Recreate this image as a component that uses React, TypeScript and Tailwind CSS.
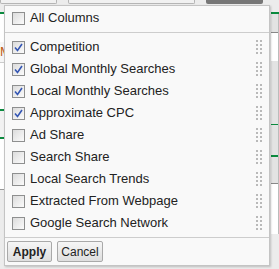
import React, { useState } from "react";

const columns = [
  { name: "Competition", on: true },
  { name: "Global Monthly Searches", on: true },
  { name: "Local Monthly Searches", on: true },
  { name: "Approximate CPC", on: true },
  { name: "Ad Share", on: false },
  { name: "Search Share", on: false },
  { name: "Local Search Trends", on: false },
  { name: "Extracted From Webpage", on: false },
  { name: "Google Search Network", on: false },
];

const Check = ({ on }: { on: boolean }) => (
  <span className="flex h-[13px] w-[13px] shrink-0 items-center justify-center border border-[#8e8f8f] bg-gradient-to-br from-[#dcdcdc] to-[#fbfbfb]">
    {on && (
      <svg width="9" height="9" viewBox="0 0 9 9">
        <path d="M1 4.5 L3.5 7.5 L8 1" fill="none" stroke="#3456b3" strokeWidth="1.6" />
      </svg>
    )}
  </span>
);

const Grip = () => (
  <div className="grid grid-cols-2 gap-x-[2px] gap-y-[2px]">
    {Array.from({ length: 8 }).map((_, i) => (
      <span key={i} className="h-[2px] w-[2px] bg-[#b9b9b9]" />
    ))}
  </div>
);

const App = () => {
  const [cols, setCols] = useState(columns);
  const allOn = cols.every((c) => c.on);

  const toggle = (i: number) =>
    setCols(cols.map((c, j) => (j === i ? { ...c, on: !c.on } : c)));

  return (
    <div className="relative h-[269px] w-[279px] overflow-hidden bg-[#ececec] font-['Liberation_Sans',Arial,sans-serif]">
      {/* page behind the popup */}
      <div className="flex h-[4px] gap-[11px]">
        <div className="w-[57px] rounded-b-[2px] border border-t-0 border-[#b5b5b5] bg-[#f1f1f1]" />
        <div className="w-[127px] rounded-b-[2px] border border-t-0 border-[#b5b5b5] bg-[#f1f1f1]" />
        <div className="w-[57px] rounded-b-[2px] bg-[#777]" />
      </div>
      <div className="mt-[8px] flex justify-between">
        <div className="h-[2px] w-[4px] bg-[#0b8a3e]" />
        <div className="h-[2px] w-[8px] bg-[#0b8a3e]" />
      </div>
      <div className="flex justify-between">
        <div className="flex w-[4px] flex-col">
          <div className="h-[28px] bg-white" />
          <div className="h-[20px] bg-[#f6f6f6] text-[13px] leading-[20px] text-[#c05a12]">M</div>
          <div className="h-[47px] border-t border-[#ccc] bg-white" />
          <div className="h-[2px] bg-[#0b8a3e]" />
          <div className="h-[26px] bg-[#f2f2f2]" />
          <div className="h-[2px] bg-[#0b8a3e]" />
          <div className="h-[50px] bg-white" />
          <div className="h-[1px] bg-[#999]" />
        </div>
        <div className="flex w-[8px] flex-col border-r border-[#bbb]">
          <div className="h-[18px] bg-[#e3e3e3]" />
          <div className="h-[1px] bg-[#888]" />
          <div className="h-[28px] bg-white" />
          <div className="h-[63px] bg-[#e3e3e3]" />
          <div className="h-[1px] bg-[#0b8a3e]" />
          <div className="h-[30px] bg-[#e3e3e3]" />
          <div className="h-[2px] bg-[#0b8a3e]" />
          <div className="h-[26px] bg-[#e3e3e3]" />
          <div className="h-[1px] bg-[#888]" />
          <div className="h-[50px] bg-white" />
        </div>
      </div>

      {/* column chooser popup */}
      <div className="absolute left-[4px] top-[5px] flex h-[261px] w-[266px] flex-col border border-[#c4c4c4] bg-[#f9f9f9] text-[13px] text-[#222] shadow-[1px_1px_2px_rgba(0,0,0,0.2)]">
        <label className="flex h-[26px] items-center gap-[5px] pb-[2px] pl-[7px]">
          <Check on={allOn} />
          <span>All Columns</span>
        </label>
        <div className="h-px bg-[#cdcdcd]" />
        <div className="flex flex-col pt-[3px]">
          {cols.map((c, i) => (
            <div
              key={c.name}
              className="flex h-[22px] items-center justify-between pl-[7px] pr-[7px]"
              onClick={() => toggle(i)}
            >
              <div className="flex items-center gap-[5px]">
                <Check on={c.on} />
                <span>{c.name}</span>
              </div>
              <Grip />
            </div>
          ))}
        </div>
        <div className="mt-[3px] h-px bg-[#cdcdcd]" />
        <div className="flex gap-[5px] pl-[2px] pt-[3px]">
          <button className="h-[21px] w-[45px] rounded-[2px] border border-[#a9a9a9] bg-gradient-to-b from-[#f6f6f6] to-[#dedede] text-[12px] font-bold text-[#222]">
            Apply
          </button>
          <button className="h-[21px] w-[46px] rounded-[2px] border border-[#a9a9a9] bg-gradient-to-b from-[#f6f6f6] to-[#dedede] text-[12px] text-[#222]">
            Cancel
          </button>
        </div>
      </div>
    </div>
  );
};

export default App;
